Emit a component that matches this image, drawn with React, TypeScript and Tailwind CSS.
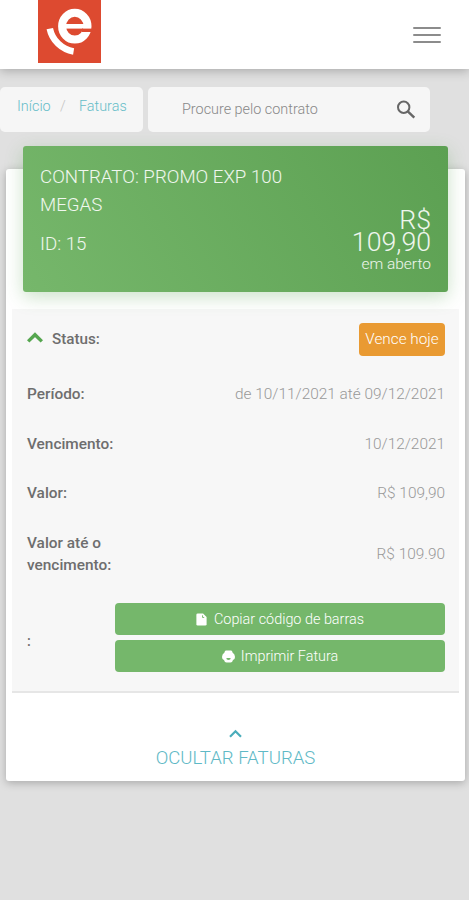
import type { ReactNode } from 'react';

const INVOICE = {
  period: 'de 10/11/2021 até 09/12/2021',
  dueDate: '10/12/2021',
  amount: 'R$ 109,90',
  amountUntilDue: 'R$ 109.90',
};

function Logo() {
  return (
    <svg width="63" height="63" viewBox="0 0 63 63" className="block">
      <rect width="63" height="63" fill="#dd4a30" />
      <ellipse cx="36.8" cy="26.2" rx="12.7" ry="13.4" fill="none" stroke="#fff" strokeWidth="8" />
      <path d="M26 24 H53 V28.6 H26 Z" fill="#fff" />
      <path d="M44 28.6 H54 V32 H44 Z" fill="#dd4a30" />
      <path d="M11.8 28.6 A29 29 0 0 0 35.6 51.4" fill="none" stroke="#fff" strokeWidth="6.6" />
    </svg>
  );
}

function Header() {
  return (
    <header className="relative z-10 flex h-[69px] items-start justify-between bg-white pl-[38px] pr-7 shadow-[0_2px_10px_rgba(0,0,0,0.25)]">
      <Logo />
      <button className="mt-[27px] flex w-7 flex-col gap-[5px]" aria-label="Menu">
        <span className="h-[2px] w-full rounded-sm bg-[#8c8c8c]" />
        <span className="h-[2px] w-full rounded-sm bg-[#8c8c8c]" />
        <span className="h-[2px] w-full rounded-sm bg-[#8c8c8c]" />
      </button>
    </header>
  );
}

function Toolbar() {
  return (
    <div className="flex gap-[5px] pt-[18px]">
      <nav className="flex h-[45px] w-[143px] rounded-[5px] bg-[#f6f6f6] pl-[17px] pt-[10px] text-[14.4px] leading-5 text-[#66bdc8]">
        <span className="w-[43px]">Início</span>
        <span className="w-[19px] text-[#c4c4c4]">/</span>
        <span>Faturas</span>
      </nav>
      <div className="flex h-[45px] w-[282px] items-center justify-between rounded-[5px] bg-[#f6f6f6] pl-[34px] pr-[14px]">
        <span className="text-[14.4px] text-[#888]">Procure pelo contrato</span>
        <svg width="20" height="20" viewBox="0 0 20 20" fill="none" stroke="#666" strokeWidth="2">
          <circle cx="7.7" cy="7.2" r="5.7" />
          <path d="M11.8 11.3 L18.3 17.6" strokeWidth="2.4" />
        </svg>
      </div>
    </div>
  );
}

function ContractSummary() {
  return (
    <div className="relative mx-[17px] -mt-[23px] flex h-[146px] justify-between rounded-[3px] bg-linear-[60deg,#76b76b,#5ca052] px-[17px] text-white/90 shadow-[0_5px_18px_rgba(70,150,60,0.28)]">
      <div className="w-[260px] pt-[17px] text-[18.7px] leading-7">
        <p>CONTRATO: PROMO EXP 100 MEGAS</p>
        <p className="mt-[11px]">ID: 15</p>
      </div>
      <div className="flex w-[90px] flex-col items-end pt-[63px] text-right">
        <p className="text-[26.7px] leading-[22px]">R$ 109,90</p>
        <p className="text-[15.5px] leading-[22px]">em aberto</p>
      </div>
    </div>
  );
}

function Row({ label, height, children }: { label: ReactNode; height: string; children: ReactNode }) {
  return (
    <div className={`flex items-center justify-between ${height}`}>
      <span className="w-[103px] shrink-0 font-medium text-[#6e6e6e]">{label}</span>
      {children}
    </div>
  );
}

function InvoiceDetails() {
  return (
    <section className="mx-[6px] mt-[17px] h-[384px] border-b-2 border-[#e6e6e6] bg-[#f7f7f7] pl-[15px] pr-[14px] text-[15.4px] leading-[22px] text-[#999]">
      <Row
        height="h-[60px]"
        label={
          <span className="flex items-center gap-[9px]">
            <svg width="16" height="11" viewBox="0 0 16 11" fill="none" stroke="#55a64f" strokeWidth="3.4" className="-mt-1">
              <path d="M1.2 9.4 L8 2.7 L14.8 9.4" />
            </svg>
            <span className="text-[15.2px]">Status:</span>
          </span>
        }
      >
        <span className="flex h-[33px] w-[86px] items-center justify-center rounded-[4px] bg-[#e99a32] text-[15.3px] text-white">
          Vence hoje
        </span>
      </Row>
      <Row height="h-[50px]" label="Período:">{INVOICE.period}</Row>
      <Row height="h-[49px]" label="Vencimento:">{INVOICE.dueDate}</Row>
      <Row height="h-[50px]" label="Valor:">{INVOICE.amount}</Row>
      <Row height="h-[71px]" label="Valor até o vencimento:">{INVOICE.amountUntilDue}</Row>
      <div className="flex items-start justify-between pt-[14px] text-[14.4px] text-white">
        <span className="pt-[28px] font-medium text-[#6e6e6e]">:</span>
        <div className="flex w-[330px] flex-col gap-[5px]">
          <button className="flex h-8 items-center justify-center gap-[7px] rounded-[4px] bg-[#75b76b] pt-px">
            <svg width="11" height="13" viewBox="0 0 11 14">
              <path d="M1.5 0.5 H7.2 L11 4.3 V12 Q11 13.5 9.5 13.5 H1.5 Q0 13.5 0 12 V2 Q0 0.5 1.5 0.5 Z" fill="#fff" />
              <path d="M6.6 2.5 V4.8 H8.4" stroke="#75b76b" fill="none" />
            </svg>
            <span className="pt-px">Copiar código de barras</span>
          </button>
          <button className="flex h-8 items-center justify-center gap-[6px] rounded-[4px] bg-[#75b76b]">
            <svg width="13" height="13" viewBox="0 0 13 13">
              <path d="M4 0.5 H9 Q10.3 0.5 10.5 2.5 Q13 4 13 7 Q13 9.6 11 10 Q10.3 12.5 8.5 12.5 H4.5 Q2.7 12.5 2 10 Q0 9.6 0 7 Q0 4 2.5 2.5 Q2.7 0.5 4 0.5 Z" fill="#fff" />
              <path d="M4.3 7.9 H8.7 Q8.7 9.9 6.5 9.9 Q4.3 9.9 4.3 7.9 Z" fill="#75b76b" />
            </svg>
            <span className="pt-[2px]">Imprimir Fatura</span>
          </button>
        </div>
      </div>
    </section>
  );
}

export default function App() {
  return (
    <div className="h-[900px] w-full overflow-hidden bg-[#e0e0e0] font-['Roboto',sans-serif] font-light">
      <Header />
      <Toolbar />
      <main className="ml-[6px] mt-[37px] flex h-[612px] w-[459px] flex-col rounded-[3px] bg-white shadow-[0_2px_8px_rgba(0,0,0,0.25)]">
        <ContractSummary />
        <InvoiceDetails />
        <button className="mt-[36px] flex flex-col items-center text-[18.6px] leading-7 text-[#5fb9c6]">
          <svg width="13" height="9" viewBox="0 0 13 9" fill="none" stroke="#4badbb" strokeWidth="2.2" className="mb-[6px]">
            <path d="M1 7.7 L6.5 2.2 L12 7.7" />
          </svg>
          OCULTAR FATURAS
        </button>
      </main>
    </div>
  );
}
